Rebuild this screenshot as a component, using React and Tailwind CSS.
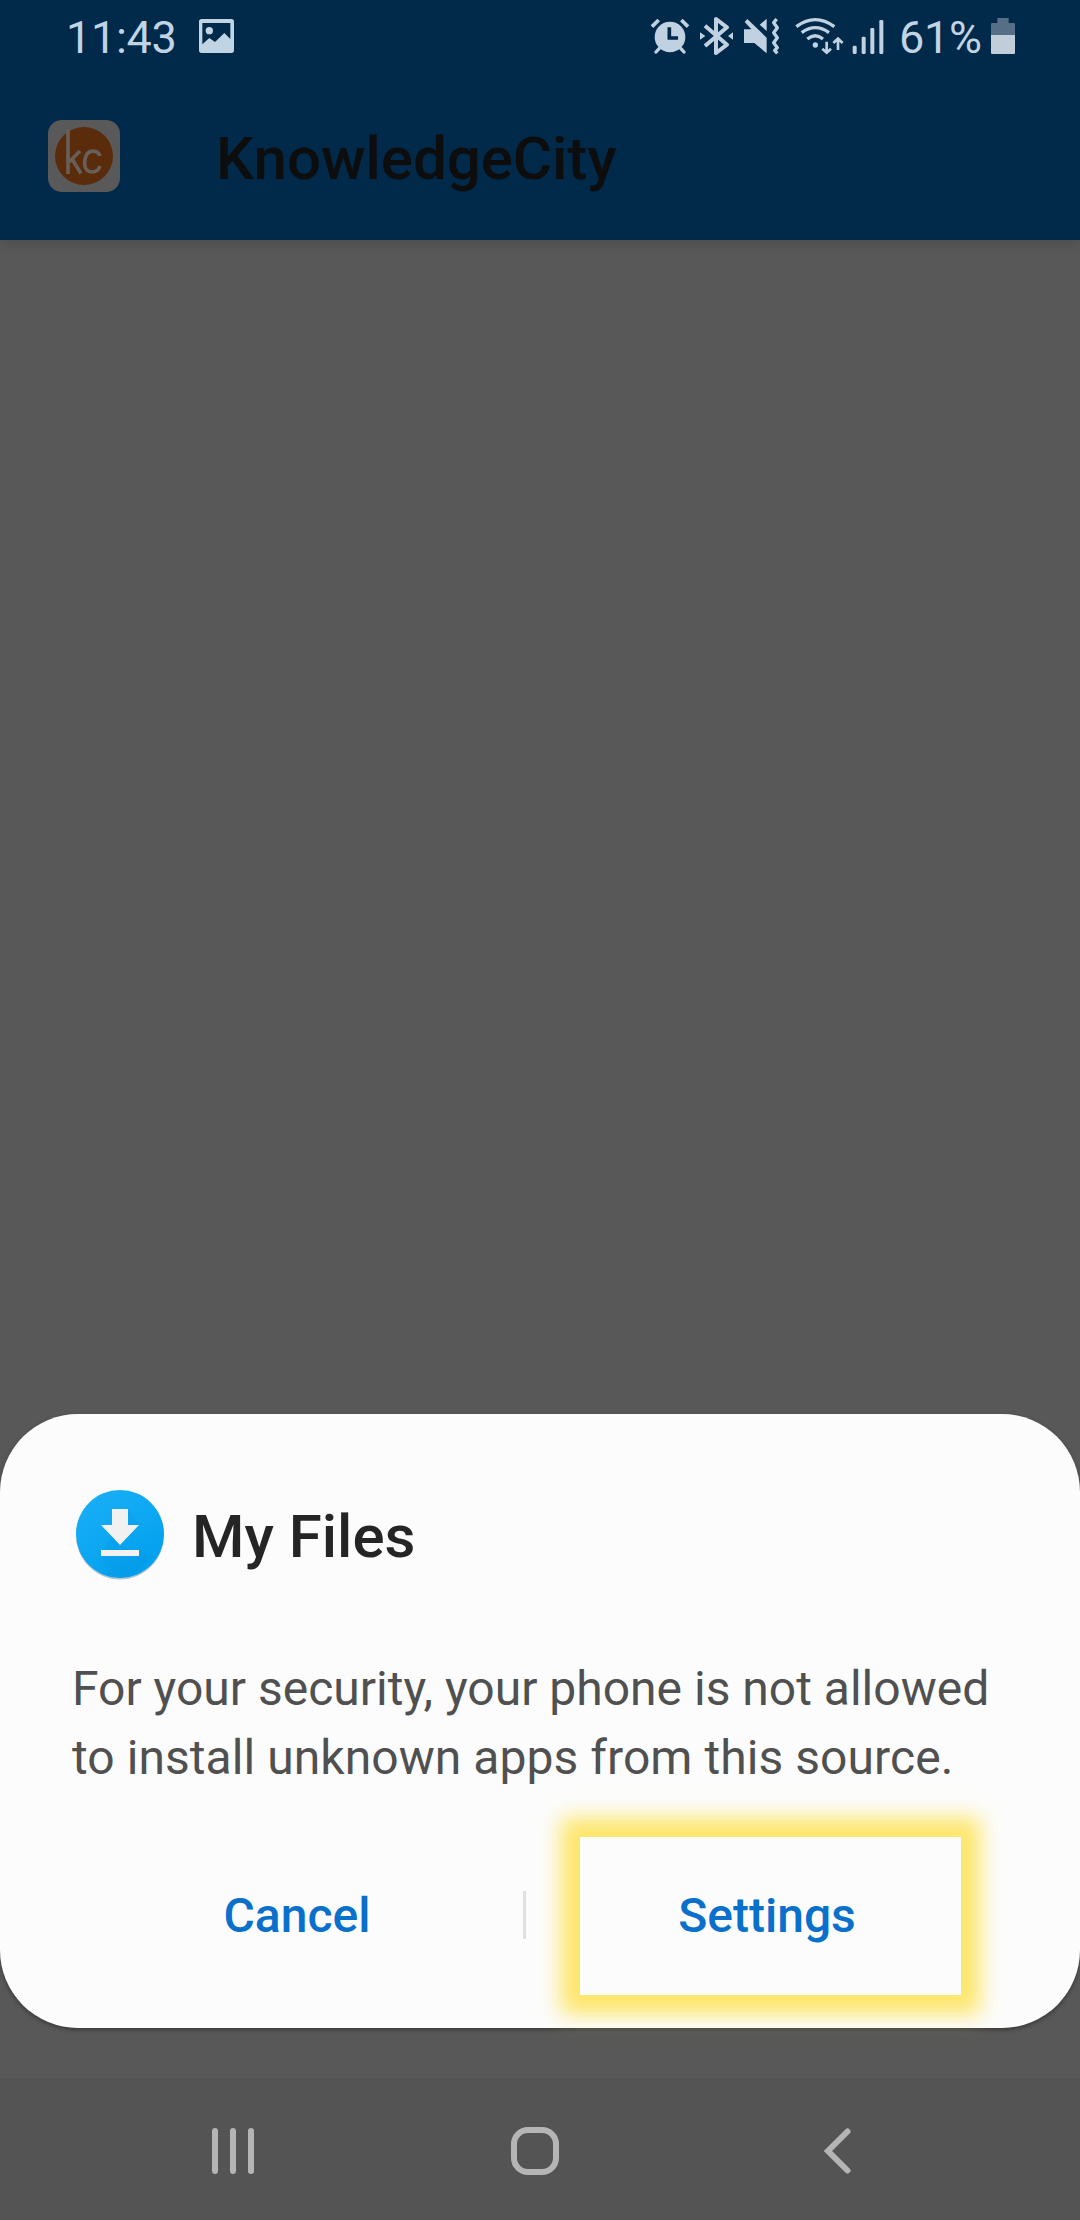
function PictureIcon() {
  return (
    <svg viewBox="594 54 111 108" className="w-[37px] h-[36px]" fill="#c0d4e4">
      <path fillRule="evenodd" d="M605 57H694Q702 57 702 65V151Q702 159 694 159H605Q597 159 597 151V65Q597 57 605 57ZM607 69V133L628 114L645 126L673 99L691 117V69Z" />
      <circle cx="628" cy="92" r="11" />
    </svg>
  );
}

function AlarmIcon() {
  return (
    <svg viewBox="60 48 120 120" className="w-10 h-10" fill="#c0d2e1" stroke="#c0d2e1">
      <path d="M66 80L86 60M174 80L154 60" fill="none" strokeWidth="11" />
      <path d="M88 145L78 156M152 145L162 156" fill="none" strokeWidth="10" strokeLinecap="round" />
      <circle cx="120" cy="111" r="46" stroke="none" />
      <path d="M118 82V114H144" fill="none" stroke="#00294a" strokeWidth="11" />
    </svg>
  );
}

function BluetoothIcon() {
  return (
    <svg viewBox="207 48 105 120" className="w-[35px] h-10" fill="none" stroke="#c0d2e1">
      <path d="M225 77L291 134L258 159V57L291 82L225 138" strokeWidth="12" strokeLinejoin="round" />
      <path d="M210 97L226 108L210 119ZM309 97L294 108L309 119Z" fill="#c0d2e1" stroke="none" />
    </svg>
  );
}

function MuteIcon() {
  return (
    <svg viewBox="339 48 114 120" className="w-[38px] h-10" fill="#c0d2e1">
      <path d="M342 88H364L344 66L352 57L410 113V160L373 129H342Z" />
      <path d="M410 56V93L389 74Z" />
      <path d="M440 57L431 68L442 83L431 98L442 113L431 128L442 143L434 151L442 160" fill="none" stroke="#c0d2e1" strokeWidth="10" strokeLinejoin="round" />
    </svg>
  );
}

function WifiIcon() {
  return (
    <svg viewBox="495 48 147 120" className="w-[49px] h-10" fill="none" stroke="#c0d2e1" strokeWidth="10">
      <path d="M499 80Q556 38 613 80" />
      <path d="M515 98Q556 68 597 98" />
      <path d="M532 117Q556 98 579 117" />
      <circle cx="556" cy="135" r="8" fill="#c0d2e1" stroke="none" />
      <path d="M590 125V155M577 146L590 158L603 146" strokeWidth="8" />
      <path d="M624 150V118M610 129L624 116L638 129" strokeWidth="8" />
    </svg>
  );
}

function SignalIcon() {
  return (
    <svg viewBox="33 48 102 120" className="w-[34px] h-10" fill="#c0d2e1">
      <rect x="38" y="137" width="12" height="25" rx="4" />
      <rect x="65" y="110" width="12" height="52" rx="4" />
      <rect x="91" y="84" width="12" height="78" rx="4" />
      <rect x="118" y="60" width="12" height="102" rx="4" />
    </svg>
  );
}

function BatteryIcon() {
  return (
    <svg viewBox="453 48 72 120" className="w-6 h-10">
      <path d="M472 54H506V69H522Q525 69 525 72V105H453V72Q453 69 456 69H472Z" fill="#566f87" />
      <path d="M453 105H525V159Q525 162 522 162H456Q453 162 453 159Z" fill="#c1ced9" />
    </svg>
  );
}

function StatusBar() {
  return (
    <div className="flex h-[72px] items-start pl-[66px] pr-[65px] pt-4 text-[45px] leading-[40px] text-[#c0d4e4]">
      <span className="w-[132px] pt-[2px] tracking-[-0.3px]">11:43</span>
      <div className="pt-0.5"><PictureIcon /></div>
      <div className="ml-auto flex">
        <AlarmIcon />
        <div className="ml-[9px]"><BluetoothIcon /></div>
        <div className="ml-[9px]"><MuteIcon /></div>
        <div className="ml-3.5"><WifiIcon /></div>
        <div className="ml-[7px]"><SignalIcon /></div>
        <span className="ml-[14px] w-[92px] pt-[2px] tracking-[-0.3px]">61%</span>
        <BatteryIcon />
      </div>
    </div>
  );
}

function AppLogo() {
  return (
    <div className="flex size-[72px] items-center justify-center rounded-[14px] bg-[#595959]">
      <svg viewBox="0 0 58 58" className="size-[58px]">
        <circle cx="29" cy="29" r="29" fill="#5a2c0c" />
        <g fill="none" stroke="#686058" strokeWidth="3.6">
          <path d="M13 2V47M14 35L25 24M17 32L26 46.500" />
          <path d="M45 29C43 23 34 22 31 29C28 37 30 45 37 45C42 45 44 42 45 39" />
        </g>
      </svg>
    </div>
  );
}

function DownloadIcon() {
  return (
    <svg viewBox="0 0 96 96" className="size-24">
      <defs>
        <linearGradient id="disc" x1="0" y1="0" x2="0.6" y2="1">
          <stop offset="0" stopColor="#1bb0f8" />
          <stop offset="1" stopColor="#03a0ee" />
        </linearGradient>
      </defs>
      <circle cx="48" cy="49.500" r="44" fill="#b5c3cc" />
      <circle cx="48" cy="48" r="44" fill="url(#disc)" />
      <path d="M56 23L67 39L48 60L80 70L62 88Q50 94 36 88L29 68Z" fill="#0795dd" opacity="0.25" />
      <path d="M40 23H56V39H67L48 59L29 39H40Z" fill="#f1f1f1" />
      <rect x="29" y="64" width="38" height="6" fill="#f1f1f1" />
    </svg>
  );
}

function NavBar() {
  return (
    <nav className="flex h-[142px] items-start bg-[#545454] pl-[209px] pt-12">
      <svg viewBox="0 0 48 50" className="h-[50px] w-12" fill="#b5b5b5">
        <rect x="3" y="2" width="6" height="46" rx="3" />
        <rect x="21" y="2" width="6" height="46" rx="3" />
        <rect x="39" y="2" width="6" height="46" rx="3" />
      </svg>
      <svg viewBox="0 0 50 50" className="ml-[253px] size-[50px]" fill="none" stroke="#b5b5b5" strokeWidth="6">
        <rect x="4" y="4" width="42" height="42" rx="14" />
      </svg>
      <svg viewBox="0 0 32 50" className="ml-[262px] h-[50px] w-8" fill="none" stroke="#b5b5b5" strokeWidth="6" strokeLinecap="round">
        <path d="M25.500 5.500L6 25L25.500 44.500" />
      </svg>
    </nav>
  );
}

export default function App() {
  return (
    <div className="flex h-[2220px] w-[1080px] flex-col overflow-hidden bg-[#585858] font-['Roboto',sans-serif]">
      <header className="h-[240px] bg-[#00294a] shadow-[0_2px_12px_rgba(0,0,0,0.16)]">
        <StatusBar />
        <div className="flex pl-12 pt-12">
          <AppLogo />
          <h1 className="ml-24 pt-[1px] text-[60px] font-medium leading-[76px] text-[#0d0d0d]">KnowledgeCity</h1>
        </div>
      </header>
      <main className="flex flex-1 flex-col justify-end pb-[50px]">
        <section className="h-[614px] rounded-[78px] bg-[#fcfcfc] pt-[72px] shadow-[0_2px_4px_rgba(0,0,0,0.35)]">
          <div className="flex items-center pl-[72px]">
            <DownloadIcon />
            <h2 className="ml-6 pt-1.5 text-[60px] font-medium leading-[70px] text-[#252525]">My Files</h2>
          </div>
          <p className="whitespace-nowrap pl-[72px] pt-[72px] text-[48px] leading-[69px] text-[#505050]">
            For your security, your phone is not allowed
            <br />
            <span className="tracking-[0.06px]">to install unknown apps from this source.</span>
          </p>
          <div className="mt-[45px] flex h-[158px] items-center pl-[71px] text-[48px] font-medium text-[#0970cb]">
            <button className="w-[452px] pb-[1px]">Cancel</button>
            <div className="mb-0.5 h-12 w-[3px] bg-[#e0e0e0]" />
            <button className="ml-[54px] h-[158px] w-[381px] pb-[1px] pr-[7px] shadow-[0_0_20px_19px_#fde668]">
              Settings
            </button>
          </div>
        </section>
      </main>
      <NavBar />
    </div>
  );
}
